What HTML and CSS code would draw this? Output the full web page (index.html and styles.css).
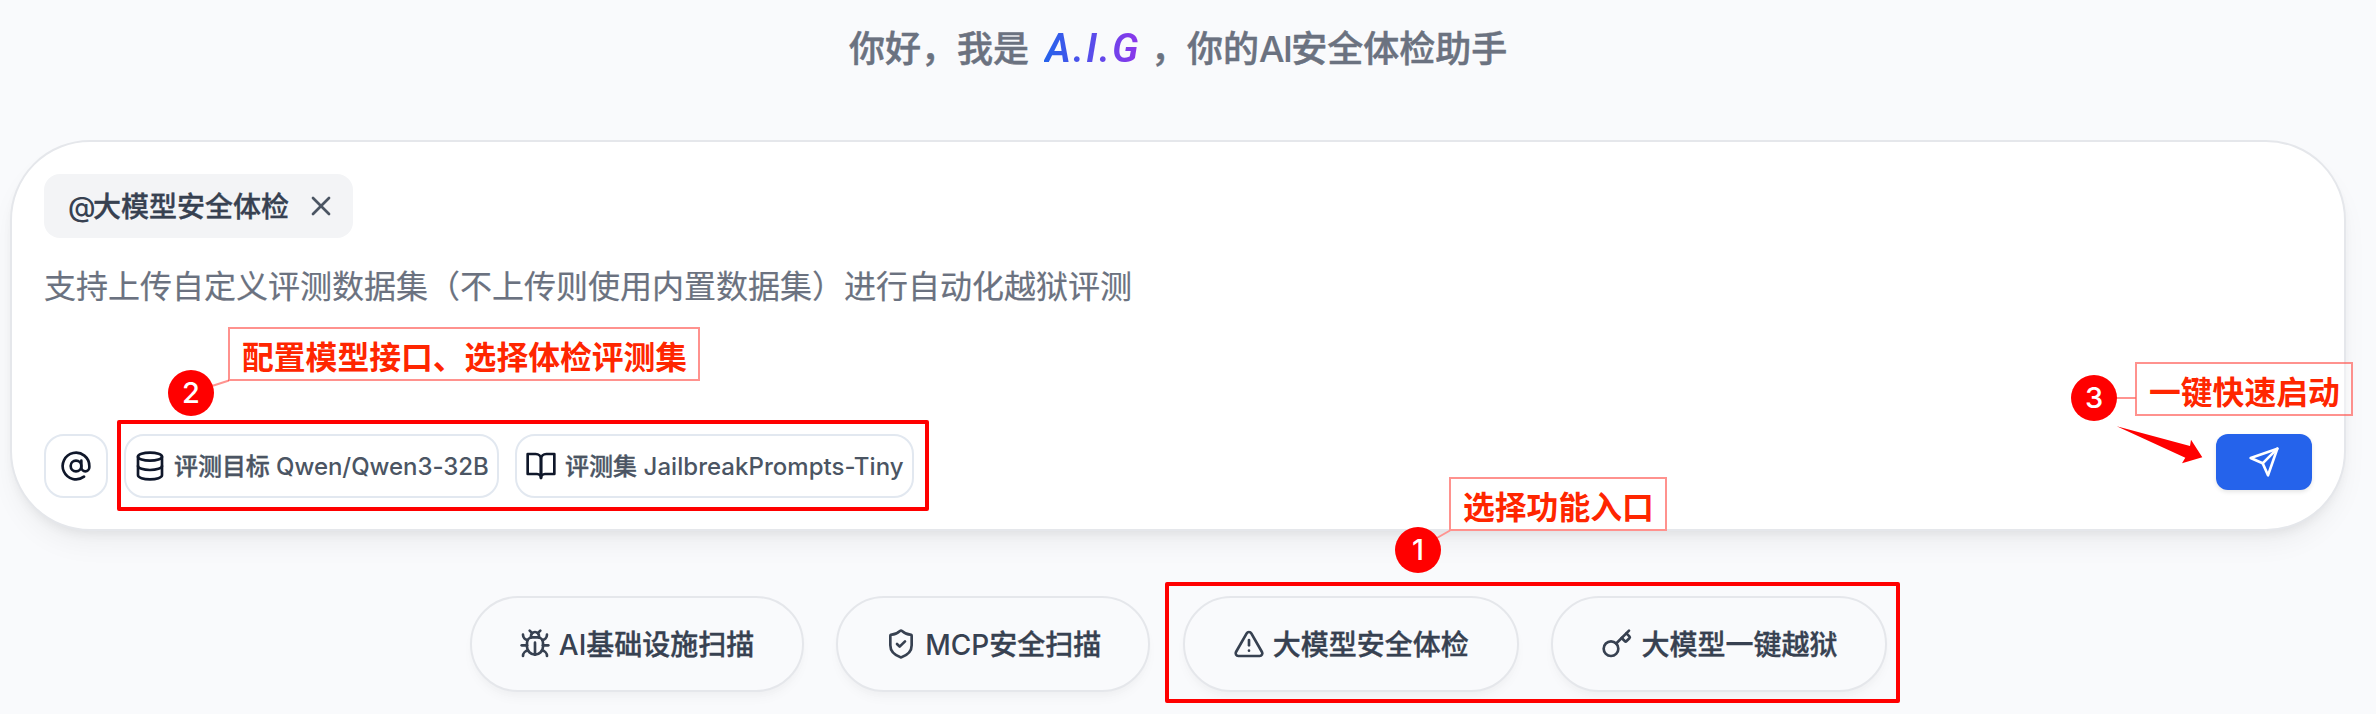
FILE: index.html
```html
<!DOCTYPE html>
<html lang="zh-CN">
<head>
<meta charset="utf-8">
<title>A.I.G</title>
<link rel="stylesheet" href="styles.css">
</head>
<body>
<main class="page">
  <h1 class="greeting"><span class="greet-a">你好，我是</span><span class="brand">A.I.G</span><span class="greet-b">，你的<span class="greet-latin">AI</span>安全体检助手</span></h1>

  <section class="composer">
    <div class="tag">
      <span class="tag-text"><span class="tag-at">@</span>大模型安全体检</span>
      <svg class="tag-close" viewBox="0 0 24 24"><path d="M18 6 6 18"/><path d="m6 6 12 12"/></svg>
    </div>
    <p class="placeholder">支持上传自定义评测数据集（不上传则使用内置数据集）进行自动化越狱评测</p>
    <div class="toolbar">
      <button class="chip chip-at">
        <svg class="icon" viewBox="0 0 24 24"><circle cx="12" cy="12" r="4"/><path d="M16 8v5a3 3 0 0 0 6 0v-1a10 10 0 1 0-4 8"/></svg>
      </button>
      <button class="chip chip-target">
        <svg class="icon" viewBox="0 0 24 24"><ellipse cx="12" cy="5" rx="9" ry="3"/><path d="M3 5V19A9 3 0 0 0 21 19V5"/><path d="M3 12A9 3 0 0 0 21 12"/></svg>
        <span class="chip-text"><span class="cjk">评测目标</span> Qwen/Qwen3-32B</span>
      </button>
      <button class="chip chip-dataset">
        <svg class="icon" viewBox="0 0 24 24"><path d="M2 3h6a4 4 0 0 1 4 4v14a3 3 0 0 0-3-3H2z"/><path d="M22 3h-6a4 4 0 0 0-4 4v14a3 3 0 0 1 3-3h7z"/></svg>
        <span class="chip-text"><span class="cjk">评测集</span> JailbreakPrompts-Tiny</span>
      </button>
      <button class="send">
        <svg class="icon" viewBox="0 0 24 24"><path d="m22 2-7 20-4-9-9-4Z"/><path d="M22 2 11 13"/></svg>
      </button>
    </div>
  </section>

  <nav class="features">
    <button class="pill pill-infra">
      <svg class="icon" viewBox="0 0 24 24"><path d="m8 2 1.88 1.88"/><path d="M14.12 3.88 16 2"/><path d="M9 7.13v-1a3.003 3.003 0 1 1 6 0v1"/><path d="M12 20c-3.3 0-6-2.7-6-6v-3a4 4 0 0 1 4-4h4a4 4 0 0 1 4 4v3c0 3.3-2.7 6-6 6"/><path d="M12 20v-9"/><path d="M6.53 9C4.6 8.8 3 7.1 3 5"/><path d="M6 13H2"/><path d="M3 21c0-2.1 1.7-3.9 3.8-4"/><path d="M20.97 5c0 2.1-1.6 3.8-3.5 4"/><path d="M22 13h-4"/><path d="M17.2 17c2.1.1 3.8 1.9 3.8 4"/></svg>
      <span class="pill-text">AI<span class="cjk">基础设施扫描</span></span>
    </button>
    <button class="pill pill-mcp">
      <svg class="icon" viewBox="0 0 24 24"><path d="M20 13c0 5-3.5 7.5-7.66 8.95a1 1 0 0 1-.67-.01C7.5 20.5 4 18 4 13V6a1 1 0 0 1 1-1c2 0 4.5-1.2 6.24-2.72a1.17 1.17 0 0 1 1.52 0C14.51 3.81 17 5 19 5a1 1 0 0 1 1 1z"/><path d="m9 12 2 2 4-4"/></svg>
      <span class="pill-text">MCP<span class="cjk">安全扫描</span></span>
    </button>
    <button class="pill pill-model">
      <svg class="icon" viewBox="0 0 24 24"><path d="m21.73 18-8-14a2 2 0 0 0-3.48 0l-8 14A2 2 0 0 0 4 21h16a2 2 0 0 0 1.73-3"/><path d="M12 9v4"/><path d="M12 17h.01"/></svg>
      <span class="pill-text cjk">大模型安全体检</span>
    </button>
    <button class="pill pill-model">
      <svg class="icon" viewBox="0 0 24 24"><path d="m15.5 7.5 2.3 2.3a1 1 0 0 0 1.4 0l2.1-2.1a1 1 0 0 0 0-1.4L19 4"/><path d="m21 2-9.6 9.6"/><circle cx="7.5" cy="15.5" r="5.5"/></svg>
      <span class="pill-text cjk">大模型一键越狱</span>
    </button>
  </nav>

  <div class="frame frame-config"></div>
  <div class="frame frame-entry"></div>
  <svg class="connectors" viewBox="0 0 2376 714">
    <path class="leader" d="M212 386 229 380.500M2115 398H2136M1436 538.500 1450 530.500"/>
    <path class="arrow" d="M2116.700 426.300 2190 446 2191 439.700 2202.300 457.300 2182 463.300 2185.300 457.700Z"/>
  </svg>
  <div class="note note-1">选择功能入口</div>
  <div class="note note-2">配置模型接口、选择体检评测集</div>
  <div class="note note-3">一键快速启动</div>
  <div class="step step-1">1</div>
  <div class="step step-2">2</div>
  <div class="step step-3">3</div>
</main>
</body>
</html>
```
FILE: styles.css
```css
* { box-sizing: border-box; }
body {
  margin: 0;
  background: #f9fafc;
  font-family: Inter, "Noto Sans CJK SC", sans-serif;
}
button { font: inherit; margin: 0; }
.page {
  position: relative;
  width: 2376px;
  height: 714px;
  overflow: hidden;
  padding: 0 30px 0 10px;
}
.icon {
  flex: none;
  width: 32px;
  height: 32px;
  fill: none;
  stroke: currentColor;
  stroke-width: 2;
  stroke-linecap: round;
  stroke-linejoin: round;
}
/* Thickens the CJK regular face to a medium weight */
.cjk { -webkit-text-stroke: .35px currentColor; }

.greeting {
  margin: 0;
  height: 140px;
  padding: 23px 0 0 839px;
  display: flex;
  font-size: 36px;
  line-height: 52px;
  font-weight: 500;
  color: #6b7280;
  white-space: nowrap;
}
.greet-a { width: 195px; }
.greet-a, .greet-b { -webkit-text-stroke: .5px currentColor; }
.greet-latin { letter-spacing: -1.600px; -webkit-text-stroke: .2px currentColor; }
.brand {
  width: 107px;
  padding-left: 1px;
  font-family: Roboto, sans-serif;
  font-style: italic;
  font-weight: 600;
  font-size: 40px;
  line-height: 52px;
  letter-spacing: 2px;
  background: linear-gradient(90deg, #2563eb, #9333ea 95%);
  -webkit-background-clip: text;
  background-clip: text;
  color: transparent;
}

.composer {
  height: 391px;
  padding: 32px;
  border: 2px solid #e5e7eb;
  border-radius: 80px;
  background: #fff;
  box-shadow: 0 16px 30px -6px rgba(0, 0, 0, .06), 0 6px 12px -4px rgba(0, 0, 0, .07);
}
.tag {
  width: 309px;
  height: 64px;
  padding: 0 20px 0 24px;
  display: flex;
  align-items: center;
  justify-content: space-between;
  border-radius: 16px;
  background: #f3f4f6;
  color: #374151;
  font-size: 28px;
  font-weight: 500;
}
.tag-text {
  padding-bottom: 2px;
  white-space: nowrap;
  -webkit-text-stroke: .35px currentColor;
}
.tag-at { letter-spacing: -2.500px; -webkit-text-stroke: 0; }
.tag-close {
  flex: none;
  width: 32px;
  height: 32px;
  margin-right: -4px;
  fill: none;
  stroke: #4b5563;
  stroke-width: 2;
  stroke-linecap: round;
}
.placeholder {
  margin: 25px 0 0;
  height: 171px;
  font-size: 32px;
  line-height: 48px;
  color: #6b7280;
  -webkit-text-stroke: .2px currentColor;
}
.toolbar { display: flex; gap: 16px; }
.chip {
  height: 64px;
  padding: 0 8px;
  display: flex;
  align-items: center;
  gap: 8px;
  border: 2px solid #e2e8f0;
  border-radius: 20px;
  background: #fff;
  color: #0f172a;
  font-size: 24px;
  font-weight: 500;
}
.chip-at { width: 64px; justify-content: center; }
.chip-target { width: 375px; }
.chip-dataset { width: 399px; }
.chip-text { padding-bottom: 3px; color: #4b5563; white-space: nowrap; }
.chip-target .chip-text { letter-spacing: -.06px; }
.chip-dataset .chip-text { letter-spacing: .04px; }
.send {
  width: 96px;
  height: 56px;
  margin-left: auto;
  display: flex;
  align-items: center;
  justify-content: center;
  border: 0;
  border-radius: 12px;
  background: #2563eb;
  color: #fff;
  box-shadow: 0 2px 4px rgba(0, 0, 0, .1);
}

.features {
  margin-top: 65px;
  padding-left: 1px;
  display: flex;
  justify-content: center;
  gap: 32.600px;
}
.pill {
  height: 96px;
  padding: 0;
  display: flex;
  align-items: center;
  justify-content: center;
  gap: 8px;
  border: 2px solid #e5e7eb;
  border-radius: 48px;
  background: #f9fafc;
  color: #374151;
  font-size: 28px;
  font-weight: 500;
  white-space: nowrap;
  box-shadow: 0 8px 12px -2px rgba(0, 0, 0, .03), 0 4px 8px -2px rgba(0, 0, 0, .02);
}
.pill-text { padding-bottom: 2px; }
.pill-infra { width: 334px; }
.pill-mcp { width: 314px; }
.pill-model { width: 336px; }

.frame {
  position: absolute;
  border: 4px solid #f00;
  border-radius: 2px;
}
.frame-config { left: 117px; top: 420px; width: 812px; height: 91px; }
.frame-entry { left: 1165px; top: 582px; width: 735px; height: 121px; }
.connectors { position: absolute; left: 0; top: 0; width: 2376px; height: 714px; }
.leader { fill: none; stroke: #ff9490; stroke-width: 2; }
.arrow { fill: #f00; }
.note {
  position: absolute;
  height: 54px;
  padding: 3px 0 0 12px;
  border: 2px solid rgba(255, 38, 30, .5);
  color: #ff2600;
  font-size: 31.800px;
  font-weight: 700;
  line-height: 52px;
  white-space: nowrap;
}
.note-1 { left: 1449px; top: 477px; width: 218px; background: #fff; }
.note-2 { left: 228px; top: 327px; width: 472px; }
.note-3 { left: 2135px; top: 362px; width: 218px; background: rgba(255, 255, 255, .4); }
.step {
  position: absolute;
  width: 46px;
  height: 46px;
  border-radius: 50%;
  background: #f00;
  color: #fff;
  font-size: 29px;
  font-weight: 500;
  line-height: 46px;
  text-align: center;
}
.step-1 { left: 1395px; top: 527px; }
.step-2 { left: 168px; top: 370px; }
.step-3 { left: 2071px; top: 375px; }
```
